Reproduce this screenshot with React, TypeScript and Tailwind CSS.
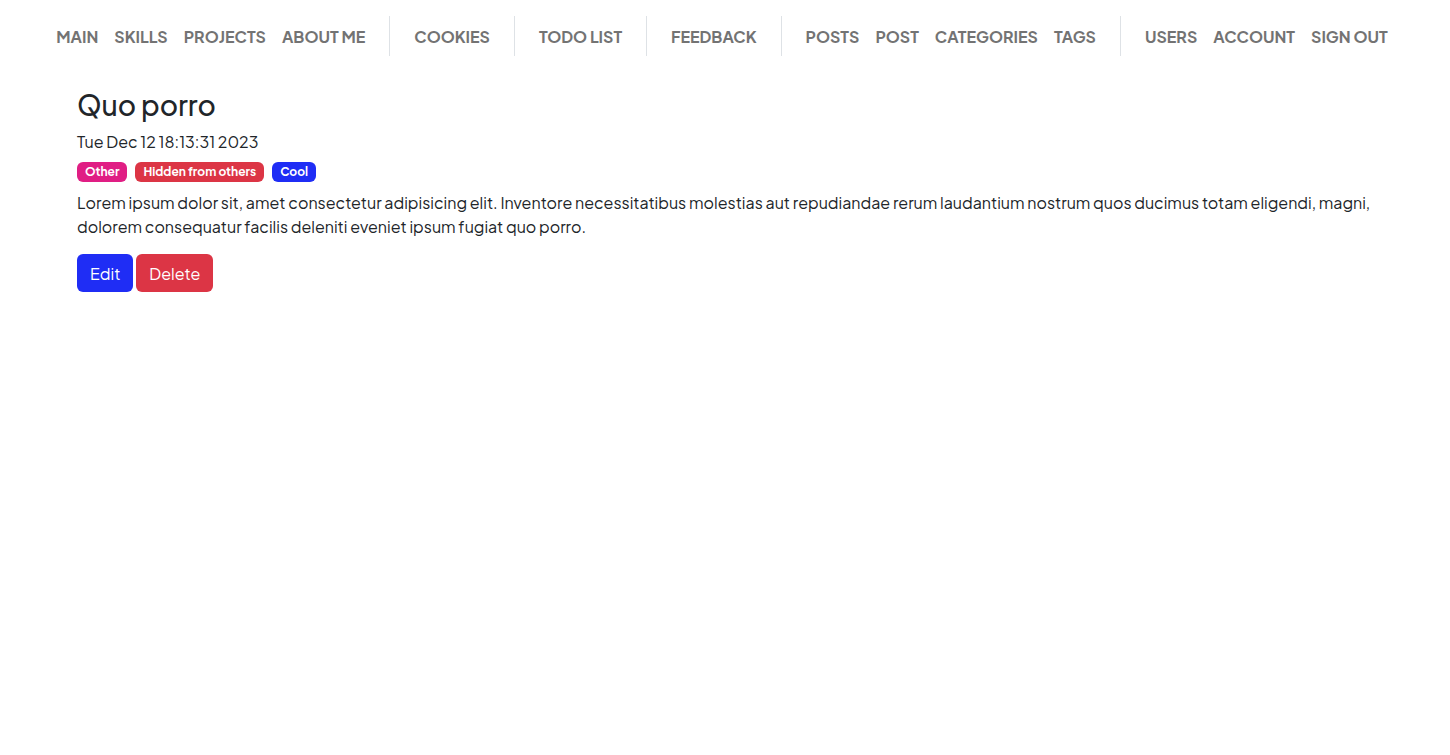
const groups: string[][] = [
  ["Main", "Skills", "Projects", "About me"],
  ["Cookies"],
  ["Todo list"],
  ["Feedback"],
  ["Posts", "Post", "Categories", "Tags"],
  ["Users", "Account", "Sign out"],
];

function NavBar() {
  return (
    <nav aria-label="Main navigation" className="flex justify-center pt-4 pr-1.5">
      {groups.map((group) => (
        <ul
          key={group[0]}
          className="flex h-10 items-center gap-4 border-l border-[#dee2e6] px-6 first:border-l-0 first:pl-0 last:pr-0"
        >
          {group.map((label) => (
            <li key={label}>
              <a href="#" className="block pt-0.5 font-bold whitespace-nowrap text-[#737373] uppercase">
                {label}
              </a>
            </li>
          ))}
        </ul>
      ))}
    </nav>
  );
}

const badges = [
  { label: "Other", color: "bg-[#e01e84]" },
  { label: "Hidden from others", color: "bg-[#dc3545]" },
  { label: "Cool", color: "bg-[#1f2df5]" },
];

export default function App() {
  return (
    <div className="font-['Plus_Jakarta_Sans','Open_Sans',sans-serif] text-base text-[#212529]">
      <NavBar />
      <main className="mx-auto px-[77px] pt-8">
        <h1 className="text-[28px] leading-[34px] font-medium">Quo porro</h1>
        <p className="mt-2">Tue Dec 12 18:13:31 2023</p>
        <ul className="mt-2 flex gap-2">
          {badges.map((b) => (
            <li key={b.label} className={`${b.color} rounded-md px-2 py-1 text-xs leading-3 font-bold text-white`}>
              {b.label}
            </li>
          ))}
        </ul>
        <p className="mt-[9px]">
          Lorem ipsum dolor sit, amet consectetur adipisicing elit. Inventore necessitatibus molestias aut repudiandae
          rerum laudantium nostrum quos ducimus totam eligendi, magni, dolorem consequatur facilis deleniti eveniet
          ipsum fugiat quo porro.
        </p>
        <div className="mt-[15px] flex gap-[3px]">
          <button type="button" className="h-[38px] rounded-md bg-[#1f2df5] px-[13px] pt-0.5 text-white">Edit</button>
          <button type="button" className="h-[38px] rounded-md bg-[#dc3545] px-[13px] pt-0.5 text-white">Delete</button>
        </div>
      </main>
    </div>
  );
}
